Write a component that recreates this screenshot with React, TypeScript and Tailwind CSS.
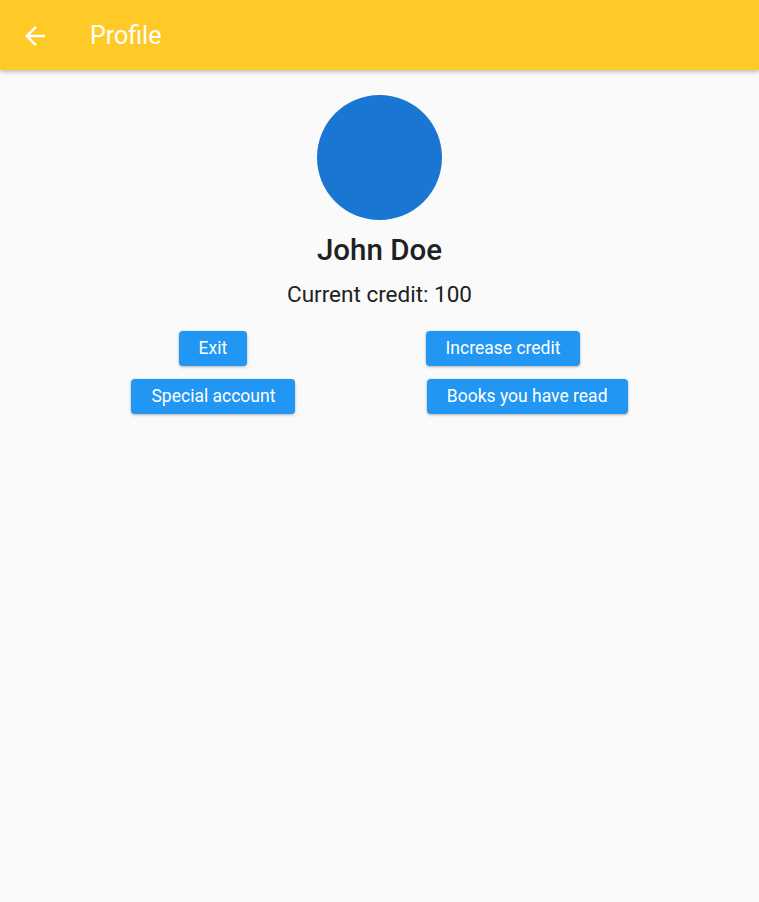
import React from "react";

const font = { fontFamily: "Roboto, 'Noto Sans', sans-serif" };

const Btn = ({ label }: { label: string }) => (
  <button className="h-[35px] px-5 rounded-[4px] bg-[#2196F3] text-white text-[17.5px] shadow-[0_1px_3px_rgba(0,0,0,0.3)]">
    {label}
  </button>
);

export default function App() {
  return (
    <div className="w-[759px] h-[902px] bg-[#FAFAFA] flex flex-col" style={font}>
      {/* App bar */}
      <div className="h-[70px] bg-[#FFCA28] flex flex-row items-center shadow-[0_2px_4px_rgba(0,0,0,0.25)] relative z-10">
        <div className="w-[30px] h-[30px] ml-5 mt-[1px] flex items-center justify-center">
          <svg width="30" height="30" viewBox="0 0 24 24" fill="white">
            <path d="M20 11H7.83l5.59-5.59L12 4l-8 8 8 8 1.41-1.41L7.83 13H20v-2z" />
          </svg>
        </div>
        <p className="ml-10 mt-[1px] text-white text-[25px]">Profile</p>
      </div>
      {/* Body */}
      <div className="flex flex-col items-center pt-[25px]">
        <div className="w-[125px] h-[125px] rounded-full bg-[#1976D2]" />
        <p className="mt-[12px] text-[29.5px] font-medium text-[#212121] leading-[36px]">John Doe</p>
        <p className="mt-[11px] text-[22.5px] text-[#212121] leading-[30px]">Current credit: 100</p>
      </div>
      <div className="flex flex-col gap-[13px] mt-[22px]">
        <div className="flex flex-row justify-evenly">
          <Btn label="Exit" />
          <Btn label="Increase credit" />
        </div>
        <div className="flex flex-row justify-evenly">
          <Btn label="Special account" />
          <Btn label="Books you have read" />
        </div>
      </div>
    </div>
  );
}
